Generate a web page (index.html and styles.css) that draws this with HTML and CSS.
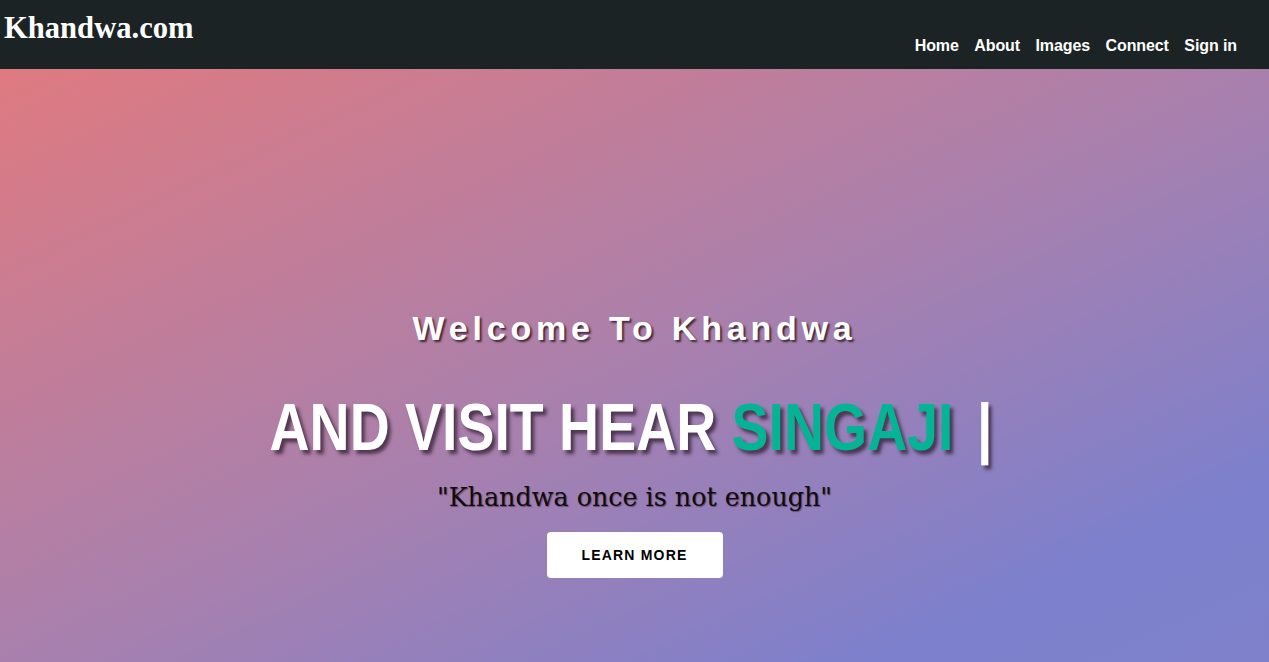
FILE: index.html
```html
<!DOCTYPE html>
<html lang="en">
<head>
<meta charset="utf-8">
<title>Khandwa.com</title>
<link rel="stylesheet" href="styles.css">
</head>
<body>
<header class="navbar">
  <div class="logo">Khandwa.com</div>
  <nav class="nav">
    <a href="#">Home</a>
    <a href="#">About</a>
    <a href="#">Images</a>
    <a href="#">Connect</a>
    <a href="#">Sign in</a>
  </nav>
</header>
<section class="hero">
  <h3 class="welcome">Welcome To Khandwa</h3>
  <h1 class="headline"><span class="white">AND VISIT HEAR </span><span class="typed">SINGAJI</span><span class="cursor">|</span></h1>
  <p class="quote">"Khandwa once is not enough"</p>
  <a class="btn" href="#">LEARN MORE</a>
</section>
</body>
</html>
```
FILE: styles.css
```css
html, body {
  margin: 0;
  padding: 0;
}
body {
  font-family: "Liberation Sans", Arial, sans-serif;
  overflow: hidden;
  height: 662px;
}
.navbar {
  height: 69px;
  background: #1c2324;
  display: flex;
  justify-content: space-between;
  align-items: flex-start;
  padding: 0 32px 0 4px;
  box-sizing: border-box;
}
.logo {
  font-family: "Liberation Serif", "Times New Roman", serif;
  font-weight: bold;
  font-size: 30.6px;
  line-height: 34px;
  color: #ffffff;
  margin-top: 11px;
}
.nav {
  display: flex;
  gap: 15.5px;
  margin-top: 36px;
}
.nav a {
  color: #ffffff;
  text-decoration: none;
  font-weight: bold;
  font-size: 16px;
  line-height: 20px;
  letter-spacing: -0.1px;
}
.hero {
  height: 593px;
  background: linear-gradient(to bottom right, #df7a80 0%, #a980ad 50%, #7c80cd 85%, #7f82ca 100%);
  display: flex;
  flex-direction: column;
  align-items: center;
  padding-top: 239px;
  box-sizing: border-box;
}
.welcome {
  margin: 0;
  font-size: 34px;
  line-height: 40px;
  font-weight: bold;
  letter-spacing: 4.8px;
  color: #ffffff;
  text-shadow: 2px 2px 2px rgba(40, 20, 30, 0.8);
}
.headline {
  margin: 44px 0 0 0;
  font-size: 66px;
  line-height: 70px;
  font-weight: bold;
  color: #ffffff;
  white-space: nowrap;
  transform: scaleX(0.84);
  text-shadow: 4px 4px 4px rgba(50, 30, 50, 0.75);
}
.typed {
  color: #05b494;
}
.cursor {
  margin-left: 28px;
  margin-right: 9px;
}
.quote {
  margin: 20px 0 0 0;
  font-family: "DejaVu Serif", serif;
  font-size: 25.4px;
  line-height: 30px;
  color: #0d0d0d;
  text-shadow: 1px 1px 1px rgba(60, 20, 40, 0.5);
}
.btn {
  margin-top: 20px;
  width: 176px;
  height: 46px;
  display: flex;
  align-items: center;
  justify-content: center;
  background: #ffffff;
  border-radius: 4px;
  color: #000000;
  text-decoration: none;
  font-weight: bold;
  font-size: 14px;
  letter-spacing: 1.2px;
}
```
